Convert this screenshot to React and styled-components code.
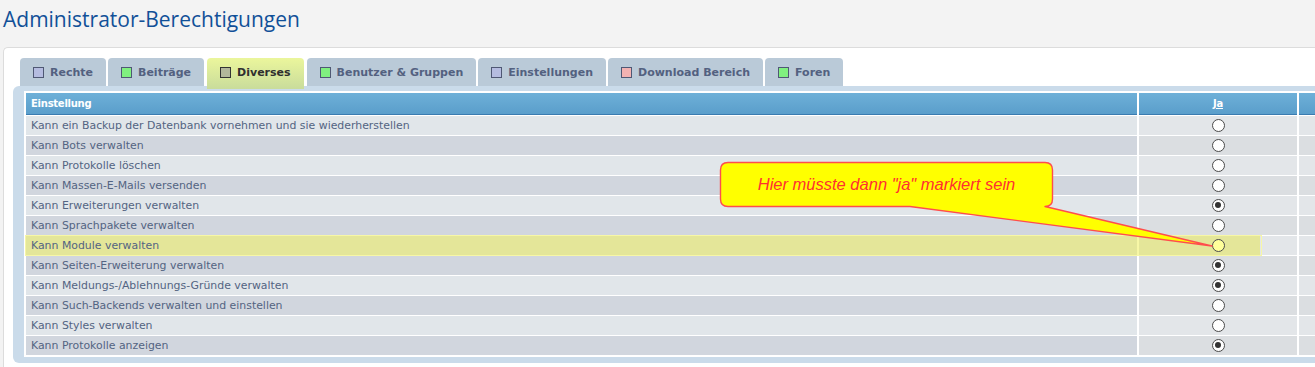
import React from 'react';
import styled, { createGlobalStyle } from 'styled-components';

const GlobalStyle = createGlobalStyle`
  html, body {
    margin: 0;
    padding: 0;
    background: #f3f3f3;
    overflow: hidden;
  }
  body {
    font-family: "DejaVu Sans", Verdana, sans-serif;
  }
`;

const tabs = [
  { label: 'Rechte', color: '#b5bce0' },
  { label: 'Beiträge', color: '#80f080' },
  { label: 'Diverses', color: '#b2b79b', active: true },
  { label: 'Benutzer & Gruppen', color: '#80f080' },
  { label: 'Einstellungen', color: '#b5bce0' },
  { label: 'Download Bereich', color: '#f2b2b2' },
  { label: 'Foren', color: '#80f080' },
];

const rows = [
  { text: 'Kann ein Backup der Datenbank vornehmen und sie wiederherstellen' },
  { text: 'Kann Bots verwalten' },
  { text: 'Kann Protokolle löschen' },
  { text: 'Kann Massen-E-Mails versenden' },
  { text: 'Kann Erweiterungen verwalten', checked: true },
  { text: 'Kann Sprachpakete verwalten' },
  { text: 'Kann Module verwalten', highlight: true },
  { text: 'Kann Seiten-Erweiterung verwalten', checked: true },
  { text: 'Kann Meldungs-/Ablehnungs-Gründe verwalten', checked: true },
  { text: 'Kann Such-Backends verwalten und einstellen' },
  { text: 'Kann Styles verwalten' },
  { text: 'Kann Protokolle anzeigen', checked: true },
];

const App = () => {
  return (
    <Page>
      <GlobalStyle />
      <Title>Administrator-Berechtigungen</Title>
      <Panel>
        <TabBar>
          {tabs.map((t) => (
            <Tab key={t.label} $active={t.active}>
              <TabBox $color={t.color} $active={t.active} />
              {t.label}
            </Tab>
          ))}
        </TabBar>
        <ContentBox>
          <Table>
            <HeadRow>
              <HeadCell>Einstellung</HeadCell>
              <HeadCell $center>
                <HeadLink>Ja</HeadLink>
              </HeadCell>
              <HeadCell />
            </HeadRow>
            {rows.map((r, i) => (
              <Row key={r.text} $highlight={r.highlight}>
                <LabelCell $dark={i % 2 === 1} $highlight={r.highlight}>
                  {r.text}
                </LabelCell>
                <OptionCell $dark={i % 2 === 1} $highlight={r.highlight}>
                  <Radio $checked={r.checked} $highlight={r.highlight} />
                </OptionCell>
                <OptionCell $dark={i % 2 === 1} />
              </Row>
            ))}
          </Table>
        </ContentBox>
      </Panel>
      <Callout>
        <svg width="505" height="94" viewBox="715 158 505 94">
          <path
            d="M728 162.5 H1045 Q1052.5 162.5 1052.5 170 V199 Q1052.5 206.5 1045 206.5 L1212 246 L910 206.5 H728 Q720.5 206.5 720.5 199 V170 Q720.5 162.5 728 162.5 Z"
            fill="#ffff00"
            stroke="#ff4d4d"
            strokeWidth="1.4"
            strokeLinejoin="round"
          />
        </svg>
        <CalloutText>Hier müsste dann "ja" markiert sein</CalloutText>
      </Callout>
    </Page>
  );
};

const Page = styled.div`
  position: relative;
  width: 1315px;
  height: 367px;
  overflow: hidden;
`;

const Title = styled.h1`
  margin: 0;
  padding: 5px 0 0 3px;
  height: 42px;
  box-sizing: border-box;
  font-family: "Open Sans", "DejaVu Sans", sans-serif;
  font-weight: 400;
  font-size: 21px;
  line-height: 28px;
  color: #115098;
`;

const Panel = styled.div`
  margin-left: 3px;
  margin-top: 5px;
  width: 1500px;
  height: 320px;
  background: #fff;
  border-top: 1px solid #dcdcdc;
  border-left: 1px solid #dcdcdc;
  border-top-left-radius: 5px;
  padding: 10px 0 0 9px;
  box-sizing: border-box;
`;

const TabBar = styled.div`
  display: flex;
  align-items: flex-start;
  gap: 2px;
  margin-left: 7px;
  height: 28px;
`;

const Tab = styled.div`
  position: relative;
  z-index: 1;
  display: flex;
  align-items: center;
  gap: 6px;
  height: ${(p) => (p.$active ? '31px' : '28px')};
  padding: 0 13px ${(p) => (p.$active ? '3px' : '0')};
  margin: 0 ${(p) => (p.$active ? '1px' : '0')};
  box-sizing: border-box;
  border-radius: 4px 4px 0 0;
  background: ${(p) =>
    p.$active ? 'linear-gradient(#ebf69c, #c9dc9b)' : '#bacad8'};
  color: ${(p) => (p.$active ? '#2f2f2f' : '#536180')};
  font-family: "DejaVu Sans", Verdana, sans-serif;
  font-weight: 700;
  font-size: 11px;
  white-space: nowrap;
`;

const TabBox = styled.span`
  width: 11px;
  height: 11px;
  box-sizing: border-box;
  border: 1px solid ${(p) => (p.$active ? '#333' : '#4f5874')};
  background: ${(p) => p.$color};
`;

const ContentBox = styled.div`
  background: #cadbea;
  border-radius: 6px;
  padding: 5px 0 6px 11px;
  margin-right: -20px;
`;

const Table = styled.div`
  display: flex;
  flex-direction: column;
  gap: 1px;
  background: #fff;
  padding: 2px;
  width: 1427px;
`;

const HeadRow = styled.div`
  display: grid;
  grid-template-columns: 1111px 158px 150px;
  column-gap: 2px;
  background: #fff;
`;

const HeadCell = styled.div`
  height: 21px;
  border-bottom: 1px solid #3a7bb0;
  background: linear-gradient(#6eb0d8, #5a9ecb);
  color: #fff;
  font-weight: 700;
  font-size: 10px;
  letter-spacing: -0.25px;
  line-height: 21px;
  padding-left: ${(p) => (p.$center ? '0' : '5px')};
  text-align: ${(p) => (p.$center ? 'center' : 'left')};
`;

const HeadLink = styled.span`
  text-decoration: underline;
`;

const Row = styled.div`
  position: relative;
  display: grid;
  grid-template-columns: 1111px 158px 150px;
  column-gap: 2px;
  height: 19px;
  background: ${(p) =>
    p.$highlight ? 'linear-gradient(to right, #f7f7a6 0 1234px, #fff 1234px)' : '#fff'};

  ${(p) =>
    p.$highlight &&
    `
    &::after {
      content: '';
      position: absolute;
      top: -1px;
      bottom: -1px;
      left: -1px;
      width: 1235px;
      border: 1px solid #f7f7a6;
      pointer-events: none;
    }
  `}
`;

const LabelCell = styled.div`
  background: ${(p) => (p.$highlight ? '#e4e699' : p.$dark ? '#d1d6de' : '#e1e6ea')};
  color: #536482;
  font-size: 10.9px;
  line-height: 19px;
  padding-left: 5px;
  white-space: nowrap;
`;

const OptionCell = styled.div`
  display: flex;
  align-items: center;
  justify-content: center;
  background: ${(p) =>
    p.$highlight
      ? 'linear-gradient(to right, #e4e699 0 121px, #e3e6e9 121px)'
      : p.$dark
      ? '#dbdee1'
      : '#e3e6e9'};
`;

const Radio = styled.span`
  position: relative;
  width: 13px;
  height: 13px;
  box-sizing: border-box;
  border-radius: 50%;
  border: 1.4px solid #4a4a4a;
  background: ${(p) => (p.$highlight ? '#ffff9a' : '#fff')};

  ${(p) =>
    p.$checked &&
    `
    &::after {
      content: '';
      position: absolute;
      left: 2.1px;
      top: 2.1px;
      width: 6px;
      height: 6px;
      border-radius: 50%;
      background: #333;
    }
  `}
`;

const Callout = styled.div`
  position: absolute;
  left: 715px;
  top: 158px;
  width: 505px;
  height: 94px;
  z-index: 5;

  svg {
    display: block;
  }
`;

const CalloutText = styled.div`
  position: absolute;
  left: 5px;
  top: 4px;
  width: 333px;
  height: 45px;
  display: flex;
  align-items: center;
  justify-content: center;
  font-family: "Liberation Sans", Arial, sans-serif;
  font-style: italic;
  font-size: 16.5px;
  color: #ff3030;
  white-space: nowrap;
`;

export default App;
